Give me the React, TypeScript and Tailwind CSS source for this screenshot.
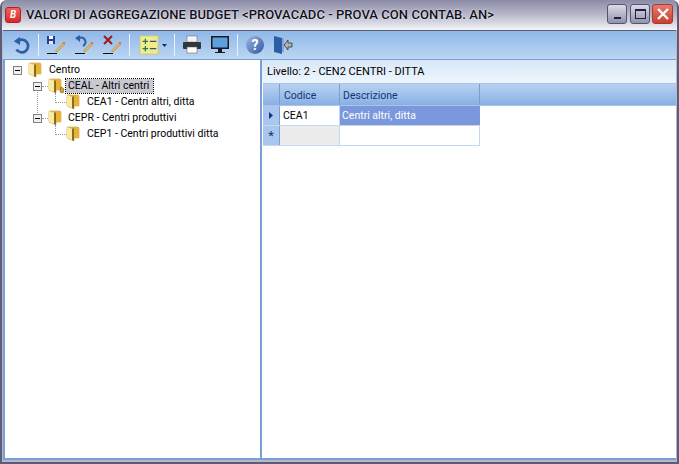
function Folder({ badge }: { badge?: boolean }) {
  return (
    <svg width="18" height="16" viewBox="0 0 18 16" className="shrink-0">
      <path d="M2 1 L13 1 L14 2 L14 12 L9 12 L9 15 L2 12 Z" fill="#f0c040" stroke="#b08a28" strokeWidth="0.5" />
      <path d="M9 2 L14 2 L14 12 L9 12 Z" fill="#eab232" />
      <path d="M2 1 L7 3 L7 14 L2 12 Z" fill="#fbeba0" />
      <path d="M7 3 L9 2 L9 15 L7 14 Z" fill="#8a6a24" />
      {badge && <path d="M14 9 L17 11 L16 15 L13 14 Z" fill="#d8a830" stroke="#6b5214" strokeWidth="0.6" />}
    </svg>
  )
}

function Expander() {
  return (
    <div className="w-[9px] h-[9px] border border-[#808080] bg-[#f0f0f0] flex items-center justify-center shrink-0">
      <div className="w-[5px] h-px bg-black" />
    </div>
  )
}

function TreeRow({ pad, icon, label, selected, badge, gap }: { pad: number; icon: boolean; label: string; selected?: boolean; badge?: boolean; gap: string }) {
  return (
    <div className="h-4 flex items-center" style={{ paddingLeft: pad }}>
      {icon && <Expander />}
      {icon && <div className="w-[5px]" />}
      <Folder badge={badge} />
      <span className={`${gap} leading-[14px] whitespace-nowrap ${selected ? 'pl-[2px] pr-[4px] bg-[#c8c8d0] outline-1 outline-dotted outline-black' : 'px-px'}`}>{label}</span>
    </div>
  )
}

function Sep() {
  return <div className="w-px h-[22px] bg-[#e8f2fb] mx-[7px] shrink-0" />
}

function Pencil() {
  return (
    <>
      <path d="M9.5 16 L17 8 L18.5 9.5 L11 17 Z" fill="#f0b850" stroke="#8a6a20" strokeWidth="0.4" />
      <circle cx="18" cy="8" r="1.3" fill="#e87070" />
      <path d="M1 18.5 L11 18.5" stroke="#111" strokeWidth="1" />
    </>
  )
}

export default function App() {
  return (
    <div className="w-[679px] h-[464px] flex flex-col bg-[#b8b8cc] font-['Roboto',sans-serif] text-[10.5px] text-black overflow-hidden rounded-t-[7px] border-x-2 border-b-2 border-[#5c5c74]">
      {/* Title bar */}
      <div className="h-[30px] flex items-center shrink-0 pl-[3px] pr-[4px] bg-gradient-to-b from-[#8c8ca8] via-[#b9b9cb] to-[#f4f4f8]">
        <div className="w-4 h-4 rounded-[3px] bg-gradient-to-b from-[#f06058] to-[#d82428] border border-[#b02024] flex items-center justify-center text-white text-[10px] font-bold italic leading-none">B</div>
        <span className="ml-[5px] text-[13px] tracking-[0.05px] font-medium whitespace-nowrap text-[#101020] [text-shadow:0_0_2px_#ffffff]">VALORI DI AGGREGAZIONE BUDGET &lt;PROVACADC - PROVA CON CONTAB. AN&gt;</span>
        <div className="ml-auto flex mb-[2px]">
          <div className="w-[20px] h-[20px] rounded-[3px] border border-[#54546c] bg-gradient-to-b from-[#dcdce8] to-[#9292aa] flex items-end justify-center pb-[4px]">
            <div className="w-[7px] h-[2px] bg-[#20204a]" />
          </div>
          <div className="w-[20px] h-[20px] ml-[3px] rounded-[3px] border border-[#54546c] bg-gradient-to-b from-[#dcdce8] to-[#9292aa] flex items-center justify-center">
            <div className="w-[11px] h-[10px] border border-[#20204a] border-t-2" />
          </div>
          <div className="w-[21px] h-[20px] ml-[2px] rounded-[3px] border border-[#a83a30] bg-gradient-to-b from-[#e8786c] to-[#c8402f] flex items-center justify-center">
            <svg width="12" height="12" viewBox="0 0 12 12"><path d="M1 1 L11 11 M11 1 L1 11" stroke="#fff" strokeWidth="2.4" /></svg>
          </div>
        </div>
      </div>

      {/* Window body */}
      <div className="flex-1 min-h-0 flex flex-col mx-px border-t border-[#5c5c74]">
        {/* Toolbar */}
        <div className="h-[29px] shrink-0 flex items-center pl-[8px] bg-gradient-to-b from-[#8fb8e8] to-[#bcd6f2] border-b border-[#7a9fd6]">
          <svg width="20" height="22" viewBox="0 0 22 24" className="shrink-0">
            <path d="M7 8 A7 7 0 1 1 6 17" fill="none" stroke="#2f5ea8" strokeWidth="3" />
            <path d="M3 8 L10 3 L10 12 Z" fill="#2f5ea8" />
          </svg>
          <Sep />
          <svg width="20" height="20" viewBox="0 0 20 20" className="shrink-0">
            <rect x="1" y="1" width="8" height="8" fill="#1f3f9a" />
            <rect x="3" y="1" width="4" height="3" fill="#fff" />
            <rect x="3" y="6" width="4" height="3" fill="#e8e8f0" />
            <Pencil />
          </svg>
          <svg width="20" height="20" viewBox="0 0 20 20" className="ml-[8px] shrink-0">
            <path d="M9 11 A4 4 0 0 0 5 3" fill="none" stroke="#2f5ea8" strokeWidth="2" />
            <path d="M1 3 L6 0 L6 7 Z" fill="#2f5ea8" />
            <Pencil />
          </svg>
          <svg width="20" height="20" viewBox="0 0 20 20" className="ml-[8px] shrink-0">
            <path d="M2 1 L10 9 M10 1 L2 9" stroke="#a01818" strokeWidth="2" />
            <Pencil />
          </svg>
          <Sep />
          <svg width="20" height="20" viewBox="0 0 22 22" className="ml-[2px] shrink-0">
            <rect x="1" y="1" width="20" height="20" fill="#f0ea90" stroke="#c8c880" />
            <path d="M4 7 H10 M7 4 V10 M4 15 H10 M7 12 V18" stroke="#1e7a50" strokeWidth="1.4" />
            <path d="M12 7 H19 M12 15 H19" stroke="#405060" strokeWidth="1.6" />
          </svg>
          <svg width="5" height="3" viewBox="0 0 5 3" className="ml-[3px] shrink-0"><path d="M0 0 H5 L2.5 3 Z" fill="#1a2a60" /></svg>
          <Sep />
          <svg width="20" height="20" viewBox="0 0 20 20" className="shrink-0">
            <rect x="5" y="1" width="10" height="6" fill="#f4f4f4" stroke="#666" strokeWidth="0.5" />
            <rect x="1" y="7" width="18" height="7" rx="1" fill="#33363c" />
            <rect x="5" y="12" width="10" height="6" fill="#fff" stroke="#555" strokeWidth="0.5" />
          </svg>
          <svg width="20" height="20" viewBox="0 0 20 20" className="ml-[8px] shrink-0">
            <rect x="1" y="1" width="18" height="13" fill="#1a1a22" />
            <rect x="2.5" y="2.5" width="15" height="10" fill="#5f9fdc" />
            <path d="M8 14 H12 V17 H15 V18 H5 V17 H8 Z" fill="#1a1a22" />
          </svg>
          <Sep />
          <div className="ml-px w-[18px] h-[18px] rounded-full bg-gradient-to-br from-[#9fb8e4] to-[#2f56a0] text-white text-[14px] font-bold flex items-center justify-center leading-none shrink-0">?</div>
          <svg width="20" height="20" viewBox="0 0 20 20" className="ml-[9px] shrink-0">
            <path d="M1 1 L9 3 L9 19 L1 17 Z" fill="#2c5ca8" />
            <path d="M9 3 H11 V17 H9 Z" fill="#88a8d4" />
            <path d="M19 8 H15 V5 L11 10 L15 15 V12 H19 Z" fill="#aeb2b6" stroke="#222" strokeWidth="0.7" />
          </svg>
        </div>

        {/* Panels */}
        <div className="flex-1 min-h-0 flex border-b-2 border-[#7a9fd6] mb-[2px]">
          <div className="w-[257px] shrink-0 bg-white border-l-2 border-[#7a9fd6] relative pt-[2px]">
            {/* Tree connectors */}
            <div className="absolute left-[32px] top-[32px] h-[21px] border-l border-dotted border-[#999]" />
            <div className="absolute left-[37px] top-[26px] w-[6px] border-b border-dotted border-[#999]" />
            <div className="absolute left-[37px] top-[58px] w-[6px] border-b border-dotted border-[#999]" />
            <div className="absolute left-[50px] top-[33px] w-[12px] h-[10px] border-l border-b border-dotted border-[#999]" />
            <div className="absolute left-[50px] top-[65px] w-[12px] h-[10px] border-l border-b border-dotted border-[#999]" />
            <TreeRow pad={8} icon label="Centro" gap="ml-[3px]" />
            <TreeRow pad={28} icon label="CEAL - Altri centri" selected badge gap="ml-px" />
            <TreeRow pad={60} icon={false} label="CEA1 - Centri altri, ditta" gap="ml-[3px]" />
            <TreeRow pad={28} icon label="CEPR - Centri produttivi" gap="ml-[2px]" />
            <TreeRow pad={60} icon={false} label="CEP1 - Centri produttivi ditta" gap="ml-[3px]" />
          </div>

          <div className="flex-1 min-w-0 bg-white border-l-2 border-[#7a9fd6]">
            <div className="h-[23px] flex items-center pl-[5px] pt-[2px] text-[11px] bg-gradient-to-b from-[#d8e8f8] to-[#eef6fd]">Livello: 2 - CEN2 CENTRI - DITTA</div>
            <div className="ml-[1px] flex h-[23px] bg-gradient-to-b from-[#b8d2f0] to-[#88b0e4] text-[#14347a] border-y border-[#a8c4ea]">
              <div className="w-[17px] border-r border-[#7a9fd6]" />
              <div className="w-[60px] border-r border-[#7a9fd6] flex items-center pl-[4px] pt-[3px]">Codice</div>
              <div className="w-[140px] border-r border-[#7a9fd6] flex items-center pl-[3px] pt-[3px]">Descrizione</div>
            </div>
            <div className="ml-[1px] flex h-[20px] w-[217px] border-b border-[#c4d8f2]">
              <div className="w-[17px] bg-[#a9c6ee] border-r border-[#7a9fd6] flex items-center justify-center">
                <svg width="4" height="7" viewBox="0 0 4 7"><path d="M0 0 L4 3.5 L0 7 Z" fill="#14347a" /></svg>
              </div>
              <div className="w-[60px] pl-[3px] pt-px flex items-center border-r border-[#c4d8f2]">CEA1</div>
              <div className="w-[140px] pl-[2px] pt-px flex items-center bg-[#7b98dc] text-white">Centri altri, ditta</div>
            </div>
            <div className="ml-[1px] flex h-[20px] w-[217px] border-b border-[#c4d8f2]">
              <div className="w-[17px] bg-[#a9c6ee] border-r border-[#7a9fd6] flex items-center justify-center text-[#14347a] text-[13px] leading-none">*</div>
              <div className="w-[60px] bg-[#ececec] border-r border-[#c4d8f2]" />
              <div className="w-[140px] border-r border-[#c4d8f2]" />
            </div>
          </div>
        </div>
      </div>
    </div>
  )
}
